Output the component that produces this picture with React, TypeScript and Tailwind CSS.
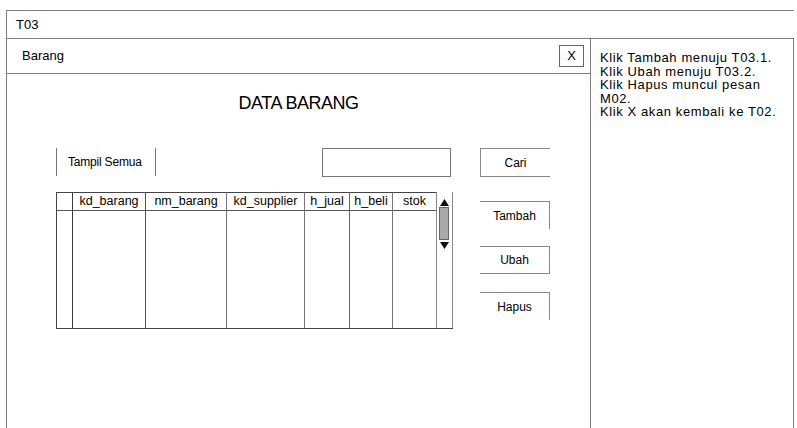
import React from 'react';

const COLUMNS = [
  { label: '', width: 'w-[16px]', line: 'border-[#3a3a3a]' },
  { label: 'kd_barang', width: 'w-[73px]', line: 'border-[#555]' },
  { label: 'nm_barang', width: 'w-[81px]', line: 'border-[#777]' },
  { label: 'kd_supplier', width: 'w-[78px]', line: 'border-[#777]' },
  { label: 'h_jual', width: 'w-[45px]', line: 'border-[#666]' },
  { label: 'h_beli', width: 'w-[43px]', line: 'border-[#777]' },
  { label: 'stok', width: 'w-[44px]', line: 'border-[#888]' },
];

function ScrollBar() {
  return (
    <div className="relative w-[16px] border-r border-[#888]">
      <svg className="absolute left-[3px] top-[7px]" width="9" height="7" viewBox="0 0 9 7">
        <polygon points="4.5,0 9,7 0,7" fill="#111" />
      </svg>
      <div className="absolute left-[2px] top-[15px] w-[10px] h-[33px] bg-[#a9a9a9] border border-[#666]" />
      <svg className="absolute left-[3px] top-[50px]" width="9" height="7" viewBox="0 0 9 7">
        <polygon points="0,0 9,0 4.5,7" fill="#111" />
      </svg>
    </div>
  );
}

function DataTable() {
  return (
    <div className="flex h-[137px] border-l border-b border-[#444] mt-[15px]">
      {COLUMNS.map((col, i) => (
        <div key={i} className={`${col.width} border-r border-t border-t-[#444] ${col.line}`}>
          <div className="h-[18px] border-b border-[#555] flex items-center justify-center text-[12.5px] text-black">
            {col.label}
          </div>
        </div>
      ))}
      <ScrollBar />
    </div>
  );
}

export default function App() {
  return (
    <div className="h-[428px] overflow-hidden bg-white pt-[10px] pl-[6px] text-black" style={{ fontFamily: '"Liberation Sans", Arial, sans-serif' }}>
      <div className="w-[788px] h-[28px] border-t border-l border-[#7f7f7f] flex items-center pl-[9px] text-[13px]">
        T03
      </div>

      <div className="flex h-[400px]">
        {/* main form */}
        <div className="w-[584px] border-l border-t border-[#7f7f7f] flex flex-col">
          <div className="h-[35px] border-b border-[#7f7f7f] flex items-center justify-between pl-[15px] pr-[6px] text-[13px]">
            <span>Barang</span>
            <div className="w-[25px] h-[22px] border border-[#666] flex items-center justify-center text-[13px]">X</div>
          </div>

          <div className="pt-[19px] text-center text-[18px] leading-[20px] tracking-[-0.5px]">DATA BARANG</div>

          <div className="flex pl-[49px] mt-[35px] gap-[27px]">
            <div className="w-[397px]">
              <div className="flex justify-between h-[29px]">
                <div className="w-[100px] h-[28px] border-l border-r border-[#777] flex items-center pl-[11px] text-[12px] tracking-[-0.2px]">
                  Tampil Semua
                </div>
                <div className="w-[129px] h-[29px] border border-[#777] mr-[2px]" />
              </div>
              <DataTable />
            </div>

            <div className="w-[70px] flex flex-col text-[12px]">
              <div className="h-[29px] border-l border-t border-b border-[#888] flex items-center justify-center">Cari</div>
              <div className="h-[28px] mt-[24px] border-t border-r border-[#888] flex items-center justify-center">Tambah</div>
              <div className="h-[28px] mt-[17px] border-t border-r border-b border-[#888] flex items-center justify-center">Ubah</div>
              <div className="h-[28px] mt-[18px] border-t border-r border-[#888] flex items-center justify-center">Hapus</div>
            </div>
          </div>
        </div>

        {/* notes */}
        <div className="w-[204px] border-l border-t border-r border-[#7f7f7f] pt-[12px] pl-[9px] text-[13px] leading-[13.5px] tracking-[0.6px]">
          <div>Klik Tambah menuju T03.1.</div>
          <div>Klik Ubah menuju T03.2.</div>
          <div>Klik Hapus muncul pesan<br />M02.</div>
          <div>Klik X akan kembali ke T02.</div>
        </div>
      </div>
    </div>
  );
}
